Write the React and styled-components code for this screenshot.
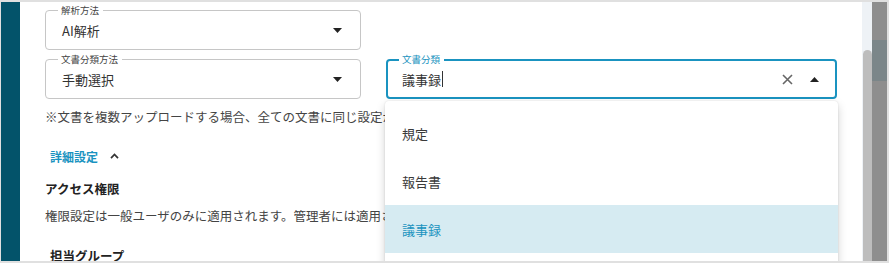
import React from "react";
import styled, { createGlobalStyle } from "styled-components";

const accent = "#1a93c0";

const GlobalStyle = createGlobalStyle`
  body {
    margin: 0;
    background: #ffffff;
    font-family: "Noto Sans CJK JP", "Noto Sans", sans-serif;
  }
`;

const Frame = styled.div`
  width: 889px;
  height: 263px;
  box-sizing: border-box;
  border: 2px solid #e0e0e0;
  border-left-width: 1px;
  display: flex;
  overflow: hidden;
`;

const SideStrip = styled.div`
  width: 19px;
  flex-shrink: 0;
  background: #03536a;
`;

const Dialog = styled.div`
  flex: 1;
  position: relative;
  background: #ffffff;
  padding: 8px 0 0 25px;
  overflow: hidden;
`;

const ScrollTrack = styled.div`
  width: 10px;
  flex-shrink: 0;
  background: #eef2f6;
  display: flex;
  flex-direction: column;
  padding-top: 48px;
  box-sizing: border-box;
`;

const ScrollThumb = styled.div`
  flex: 1;
  margin-left: 1px;
  border-radius: 5px 5px 0 0;
  background: #bdbdbd;
`;

const Backdrop = styled.div`
  width: 15px;
  flex-shrink: 0;
  background: #8e8e8e;
  display: flex;
  flex-direction: column;
  padding-top: 38px;
  box-sizing: border-box;
`;

const BackdropBand = styled.div`
  height: 41px;
  background: #7b8689;
`;

const Row = styled.div`
  display: flex;
  gap: 25px;
  margin-bottom: 9px;
`;

const FieldWrap = styled.div`
  position: relative;
  width: ${(p) => p.$width}px;
`;

const FieldBox = styled.div`
  height: 40px;
  box-sizing: border-box;
  border: ${(p) => (p.$focused ? `2px solid ${accent}` : "1px solid #c6c6c6")};
  border-radius: 4px;
  display: flex;
  align-items: center;
  padding: ${(p) => (p.$focused ? "0 14px 0 14px" : "0 16px 0 16px")};
  font-size: 13px;
  color: #333;
`;

const FieldLabel = styled.span`
  position: absolute;
  top: -6px;
  left: 13px;
  padding: 0 4px 0 3px;
  background: #ffffff;
  font-size: 9.5px;
  line-height: 12px;
  color: ${(p) => (p.$focused ? accent : "#444")};
`;

const Value = styled.span`
  flex: 1;
  display: flex;
  align-items: center;
`;

const Caret = styled.span`
  display: inline-block;
  width: 1px;
  height: 16px;
  background: #333;
  margin-left: 1px;
`;

const IconSlot = styled.span`
  display: flex;
  align-items: center;
  justify-content: center;
  width: 14px;
  margin-left: ${(p) => p.$gap || 0}px;
`;

const Menu = styled.div`
  position: absolute;
  top: calc(100% + 2px);
  left: -1px;
  width: 453px;
  padding: 8px 0 20px;
  background: #ffffff;
  border-radius: 4px;
  box-shadow: 0 4px 10px rgba(0, 0, 0, 0.18), 0 0 2px rgba(0, 0, 0, 0.12);
  z-index: 2;
`;

const MenuItem = styled.div`
  height: 48px;
  display: flex;
  align-items: center;
  padding-left: 17px;
  font-size: 13px;
  color: ${(p) => (p.$active ? accent : "#3a3a3a")};
  background: ${(p) => (p.$active ? "#d6ebf2" : "transparent")};
`;

const Note = styled.p`
  margin: ${(p) => p.$top}px 0 0;
  width: 340px;
  overflow: hidden;
  font-size: 12.5px;
  line-height: 18px;
  color: #444;
  white-space: nowrap;
`;

const Toggle = styled.div`
  margin-top: 20px;
  padding-left: 5px;
  height: 20px;
  display: flex;
  align-items: center;
  gap: 12px;
  font-size: 12px;
  font-weight: 700;
  color: ${accent};
`;

const Heading = styled.h3`
  margin: ${(p) => p.$top}px 0 0;
  padding-left: ${(p) => p.$indent || 0}px;
  font-size: 12.5px;
  line-height: 18px;
  font-weight: 700;
  color: #222;
`;

const ArrowDrop = ({ up }) => (
  <svg width="9" height="5" viewBox="0 0 9 5">
    <path d={up ? "M0 5 L4.5 0 L9 5 Z" : "M0 0 L9 0 L4.5 5 Z"} fill="#222" />
  </svg>
);

const ClearIcon = () => (
  <svg width="11" height="11" viewBox="0 0 11 11">
    <path d="M1 1 L10 10 M10 1 L1 10" stroke="#666" strokeWidth="1.6" />
  </svg>
);

const ChevronUp = () => (
  <svg width="9" height="6" viewBox="0 0 9 6">
    <path d="M1 5.2 L4.5 1.5 L8 5.2" stroke="#333" strokeWidth="1.7" fill="none" />
  </svg>
);

function SelectField({ label, value, width }) {
  return (
    <FieldWrap $width={width}>
      <FieldBox>
        <Value>{value}</Value>
        <IconSlot>
          <ArrowDrop />
        </IconSlot>
      </FieldBox>
      <FieldLabel>{label}</FieldLabel>
    </FieldWrap>
  );
}

const options = ["規定", "報告書", "議事録"];

function Autocomplete() {
  return (
    <FieldWrap $width={451}>
      <FieldBox $focused>
        <Value>
          議事録
          <Caret />
        </Value>
        <IconSlot>
          <ClearIcon />
        </IconSlot>
        <IconSlot $gap={13}>
          <ArrowDrop up />
        </IconSlot>
      </FieldBox>
      <FieldLabel $focused>文書分類</FieldLabel>
      <Menu>
        {options.map((o) => (
          <MenuItem key={o} $active={o === "議事録"}>
            {o}
          </MenuItem>
        ))}
      </Menu>
    </FieldWrap>
  );
}

export default function App() {
  return (
    <>
      <GlobalStyle />
      <Frame>
        <SideStrip />
        <Dialog>
          <Row>
            <SelectField label="解析方法" value="AI解析" width={316} />
          </Row>
          <Row>
            <SelectField label="文書分類方法" value="手動選択" width={316} />
            <Autocomplete />
          </Row>
          <Note $top={7}>※文書を複数アップロードする場合、全ての文書に同じ設定が適用されます。</Note>
          <Toggle>
            詳細設定
            <ChevronUp />
          </Toggle>
          <Heading $top={14}>アクセス権限</Heading>
          <Note $top={9}>
            権限設定は一般ユーザのみに適用されます。管理者には適用されません。
          </Note>
          <Heading $top={22} $indent={5}>
            担当グループ
          </Heading>
        </Dialog>
        <ScrollTrack>
          <ScrollThumb />
        </ScrollTrack>
        <Backdrop>
          <BackdropBand />
        </Backdrop>
      </Frame>
    </>
  );
}
